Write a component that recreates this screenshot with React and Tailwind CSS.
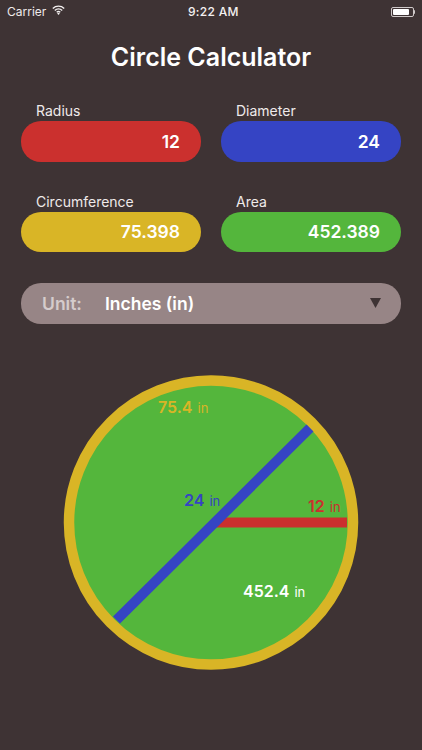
const font = "font-['Inter','Liberation_Sans',sans-serif]";

const Field = ({ label, value, color }) => (
  <div className="w-[180px]">
    <div className="pl-[15px] h-[20px] text-[14px] leading-[20px] text-[#efeaea]">{label}</div>
    <div className={`h-[40.5px] rounded-[20px] ${color} flex items-center justify-end pr-[21px] pt-[1px] text-[17.5px] font-semibold text-white`}>
      {value}
    </div>
  </div>
);

const Label = ({ value, className }) => (
  <div className={`absolute whitespace-nowrap ${className}`}>
    <span className="text-[16px] font-semibold">{value}</span>
    <span className="text-[13px] ml-[5px]">in</span>
  </div>
);

export default function App() {
  return (
    <div className={`w-[422px] h-[750px] bg-[#3e3334] overflow-hidden ${font}`}>
      {/* Status bar */}
      <div className="h-[23px] relative flex items-center justify-between pl-[7px] pr-[7px] text-white">
        <div className="flex items-center gap-[6px] text-[12px] text-[#efeaea]">
          <span>Carrier</span>
          <svg width="13" height="10" viewBox="0 0 13 10" fill="none" stroke="#f4f1f1" strokeWidth="1.4" className="-mt-[3px]">
            <path d="M0.8 3.4C4 0.4 9 0.4 12.2 3.4" />
            <path d="M2.8 5.4C4.9 3.5 8.1 3.5 10.2 5.4" />
            <path d="M4.7 7.3C5.7 6.5 7.3 6.5 8.3 7.3" />
            <path d="M6.5 9.9L5.2 8.5C6 7.9 7 7.9 7.8 8.5Z" fill="#f4f1f1" stroke="none" />
          </svg>
        </div>
        <div className="absolute left-[188px] text-[12px] font-medium tracking-[0.3px] text-[#f4f1f1]">9:22 AM</div>
        <div className="flex items-center">
          <div className="w-[23px] h-[10px] rounded-[2px] border border-[#cfc9c9] p-[1px]">
            <div className="h-full w-[16px] bg-white rounded-[1px]" />
          </div>
          <div className="w-[1.5px] h-[4px] bg-[#cfc9c9] rounded-r" />
        </div>
      </div>

      {/* Title */}
      <h1 className="mt-[18px] h-[32px] text-center text-[25px] leading-[32px] font-semibold text-white">Circle Calculator</h1>

      {/* Values */}
      <div className="mt-[28px] px-[21px] flex flex-col gap-[30px]">
        <div className="flex justify-between">
          <Field label="Radius" value="12" color="bg-[#cb302e]" />
          <Field label="Diameter" value="24" color="bg-[#3544c4]" />
        </div>
        <div className="flex justify-between">
          <Field label="Circumference" value="75.398" color="bg-[#d9b526]" />
          <Field label="Area" value="452.389" color="bg-[#54b63c]" />
        </div>
      </div>

      {/* Unit select */}
      <div className="mt-[31px] mx-[21px] h-[40.5px] rounded-[20px] bg-[#978586] flex items-center pl-[21px] pr-[20px] pt-[1px] text-[17.5px] font-semibold">
        <span className="w-[63px] text-[#d5cccc]">Unit:</span>
        <span className="flex-1 text-white">Inches (in)</span>
        <svg width="11" height="10" viewBox="0 0 11 10" fill="#3e3334" className="-mt-[1px]"><path d="M0 0H11L5.5 10Z" /></svg>
      </div>

      {/* Circle diagram */}
      <div className="relative mt-[51px] mx-auto w-[296px] h-[296px]">
        <svg width="296" height="296" viewBox="0 0 296 296">
          <circle cx="148" cy="147.5" r="142" fill="#54b63c" stroke="#d9b526" strokeWidth="10.5" />
          <rect x="153" y="142.5" width="131" height="10" fill="#cb302e" />
          <line x1="53.5" y1="245" x2="247" y2="53" stroke="#3544c4" strokeWidth="10" />
        </svg>
        <Label value="75.4" className="left-[95px] top-[20px] text-[#d9b526]" />
        <Label value="24" className="left-[121px] top-[113px] text-[#3544c4]" />
        <Label value="12" className="left-[245px] top-[119px] text-[#cb302e]" />
        <Label value="452.4" className="left-[180px] top-[204px] text-white" />
      </div>
    </div>
  );
}
